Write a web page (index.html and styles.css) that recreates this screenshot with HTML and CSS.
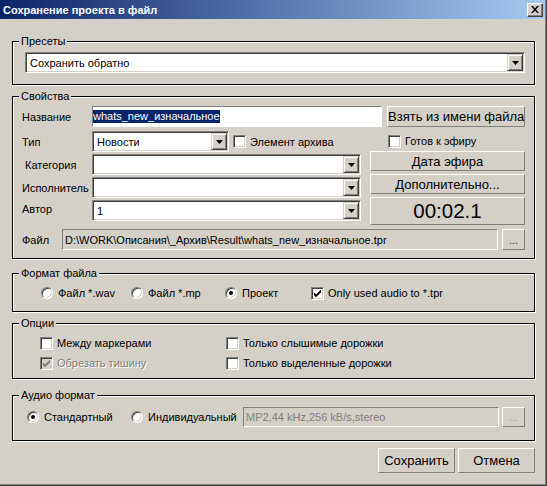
FILE: index.html
```html
<!DOCTYPE html>
<html lang="ru">
<head>
<meta charset="utf-8">
<title>Сохранение проекта в файл</title>
<link rel="stylesheet" href="styles.css">
</head>
<body>
<div class="window">
  <div class="titlebar">
    <span class="title">Сохранение проекта в файл</span>
    <span class="close"><svg width="8" height="7" viewBox="0 0 8 7"><path d="M0 0h2l2 2.5L6 0h2L5 3.5 8 7H6L4 4.5 2 7H0l3-3.5z"/></svg></span>
  </div>
  <div class="content">
    <fieldset class="group">
      <legend>Пресеты</legend>
      <div class="inner in-presets">
        <div class="combo"><span class="combo-text">Сохранить обратно</span><span class="drop"><svg class="arrow" width="7" height="4" viewBox="0 0 7 4"><path d="M0 0h7L3.5 4z"/></svg></span></div>
      </div>
    </fieldset>

    <fieldset class="group g-props">
      <legend>Свойства</legend>
      <div class="inner in-props">
        <div class="row r-name">
          <span class="lbl">Название</span>
          <div class="field name-field"><span class="sel">whats_new_изначальное</span></div>
          <div class="btn btn-take">Взять из имени файла</div>
        </div>
        <div class="mid">
          <div class="mid-left">
            <div class="row">
              <span class="lbl">Тип</span>
              <div class="combo c-type"><span class="combo-text">Новости</span><span class="drop"><svg class="arrow" width="7" height="4" viewBox="0 0 7 4"><path d="M0 0h7L3.5 4z"/></svg></span></div>
              <span class="chk-item chk-arch"><span class="chk"></span>Элемент архива</span>
            </div>
            <div class="row">
              <span class="lbl lbl-ind">Категория</span>
              <div class="combo c-long"><span class="combo-text"></span><span class="drop"><svg class="arrow" width="7" height="4" viewBox="0 0 7 4"><path d="M0 0h7L3.5 4z"/></svg></span></div>
            </div>
            <div class="row">
              <span class="lbl">Исполнитель</span>
              <div class="combo c-long"><span class="combo-text"></span><span class="drop"><svg class="arrow" width="7" height="4" viewBox="0 0 7 4"><path d="M0 0h7L3.5 4z"/></svg></span></div>
            </div>
            <div class="row">
              <span class="lbl lbl-up">Автор</span>
              <div class="combo c-long"><span class="combo-text">1</span><span class="drop"><svg class="arrow" width="7" height="4" viewBox="0 0 7 4"><path d="M0 0h7L3.5 4z"/></svg></span></div>
            </div>
          </div>
          <div class="mid-right">
            <div class="chk-item ready"><span class="chk"></span>Готов к эфиру</div>
            <div class="btn btn-r">Дата эфира</div>
            <div class="btn btn-r">Дополнительно...</div>
            <div class="timer">00:02.1</div>
          </div>
        </div>
        <div class="row r-file">
          <span class="lbl lbl-file">Файл</span>
          <div class="field dis file-field">D:\WORK\Описания\_Архив\Result\whats_new_изначальное.tpr</div>
          <div class="btn btn-dots">...</div>
        </div>
      </div>
    </fieldset>

    <fieldset class="group g-format">
      <legend>Формат файла</legend>
      <div class="inner in-format">
        <div class="row r-opt">
          <span class="opt w90"><span class="radio"></span>Файл *.wav</span>
          <span class="opt w94"><span class="radio"></span>Файл *.mp</span>
          <span class="opt w86"><span class="radio on"></span>Проект</span>
          <span class="opt"><span class="chk"><svg width="7" height="7" viewBox="0 0 7 7"><path d="M0 2.5L2 4.5 7 -0.5V2.5L2 7.2 0 5.2z"/></svg></span>Only used audio to *.tpr</span>
        </div>
      </div>
    </fieldset>

    <fieldset class="group g-options">
      <legend>Опции</legend>
      <div class="inner in-options">
        <div class="opt-grid">
          <span class="opt"><span class="chk"></span>Между маркерами</span>
          <span class="opt"><span class="chk"></span>Только слышимые дорожки</span>
          <span class="opt dis-text"><span class="chk dis"><svg width="7" height="7" viewBox="0 0 7 7"><path d="M0 2.5L2 4.5 7 -0.5V2.5L2 7.2 0 5.2z"/></svg></span>Обрезать тишину</span>
          <span class="opt"><span class="chk"></span>Только выделенные дорожки</span>
        </div>
      </div>
    </fieldset>

    <fieldset class="group g-audio">
      <legend>Аудио формат</legend>
      <div class="inner in-audio">
        <div class="row r-audio">
          <span class="opt w104"><span class="radio on"></span>Стандартный</span>
          <span class="opt w112"><span class="radio"></span>Индивидуальный</span>
          <div class="field dis audio-field">MP2,44 kHz,256 kB/s,stereo</div>
          <div class="btn btn-dots dots-dis">...</div>
        </div>
      </div>
    </fieldset>

    <div class="actions">
      <div class="btn btn-act">Сохранить</div>
      <div class="btn btn-act">Отмена</div>
    </div>
  </div>
</div>
</body>
</html>
```
FILE: styles.css
```css
* { box-sizing: border-box; }
html, body { margin: 0; padding: 0; }
body {
  width: 547px;
  height: 486px;
  overflow: hidden;
  background: #d4d0c8;
  font-family: "Liberation Sans", Arial, sans-serif;
  font-size: 11px;
  color: #000;
}
.window {
  width: 547px;
  height: 486px;
  background: #d4d0c8;
  box-shadow: inset -1px -1px 0 #404040, inset -2px -2px 0 #808080;
}
.titlebar {
  width: 545px;
  height: 19px;
  display: flex;
  align-items: center;
  padding-left: 3px;
  background: linear-gradient(to right, #0a246a, #a6caf0);
}
.title {
  flex: 1;
  color: #fff;
  font-weight: bold;
  font-size: 11px;
}
.close {
  width: 16px;
  height: 14px;
  margin-right: 2px;
  display: flex;
  align-items: center;
  justify-content: center;
  background: #d4d0c8;
  border: 1px solid;
  border-color: #fff #404040 #404040 #fff;
  box-shadow: inset -1px -1px 0 #808080;
}
.content { padding: 0 12px; }

.group {
  margin: 4px 0 0 0;
  padding: 0;
  min-width: 0;
  border: 1px solid #000;
  box-shadow: inset 1px 1px 0 #fff, 1px 1px 0 #fff;
}
.group legend {
  margin-left: 6px;
  padding: 0 2px;
  line-height: 15px;
  background: #d4d0c8;
}
.group:first-child { margin-top: 15px; }
.g-format { margin-top: 7px; }
.g-audio { margin-top: 9px; }

.in-presets { padding: 3px 9px 11px 12px; }
.in-props { padding: 2px 9px 8px 9px; }
.in-format { padding: 4px 9px 10px 28px; }
.in-options { padding: 4px 9px 7px 27px; }
.in-audio { padding: 4px 9px 13px 14px; }

.row { display: flex; align-items: center; }
.lbl { width: 70px; flex: none; }
.lbl-ind { padding-left: 3px; }
.lbl-up { position: relative; top: -2px; }
.lbl-file { width: 40px; }

.combo {
  height: 21px;
  display: flex;
  background: #fff;
  border: 1px solid;
  border-color: #808080 #fff #fff #808080;
  box-shadow: inset 1px 1px 0 #404040, inset -1px -1px 0 #d4d0c8;
  padding: 1px;
}
.combo-text {
  flex: 1;
  display: flex;
  align-items: center;
  padding-left: 3px;
}
.drop {
  width: 16px;
  flex: none;
  display: flex;
  align-items: center;
  justify-content: center;
  background: #d4d0c8;
  border: 1px solid;
  border-color: #d4d0c8 #404040 #404040 #d4d0c8;
  box-shadow: inset 1px 1px 0 #fff, inset -1px -1px 0 #808080;
}
.arrow { display: block; }
.c-type { width: 137px; flex: none; }
.c-long { flex: 1; }

.field {
  height: 21px;
  display: flex;
  align-items: center;
  background: #fff;
  border: 1px solid;
  border-color: #808080 #fff #fff #808080;
  padding-left: 1px;
  white-space: nowrap;
  overflow: hidden;
}
.field.dis { background: #d4d0c8; }
.name-field { width: 290px; flex: none; margin-right: 5px; padding-left: 0; }
.sel {
  background: #0a246a;
  color: #fff;
  line-height: 13px;
}
.file-field { flex: 1; margin-right: 4px; padding-left: 2px; }
.audio-field { flex: 1; height: 20px; margin-right: 3px; padding-left: 2px; color: #808080; }

.btn {
  display: flex;
  align-items: center;
  justify-content: center;
  background: #d4d0c8;
  border: 1px solid;
  border-color: #fff #808080 #808080 #fff;
  font-size: 13px;
  white-space: nowrap;
}
.btn-take { flex: 1; height: 21px; }
.btn-r { height: 20px; }
.btn-r + .btn-r { margin-top: 3px; }
.btn-dots {
  width: 23px;
  height: 21px;
  flex: none;
  font-size: 11px;
  color: #404040;
  align-items: flex-end;
  padding-bottom: 3px;
}
.dots-dis { height: 20px; color: #a0a0a0; }

.mid { display: flex; gap: 9px; margin-top: 4px; }
.mid-left { width: 339px; display: flex; flex-direction: column; gap: 2px; }
.mid-right { flex: 1; display: flex; flex-direction: column; }
.ready { height: 20px; padding-left: 18px; }
.timer {
  height: 28px;
  margin-top: 3px;
  display: flex;
  align-items: center;
  justify-content: center;
  font-size: 20.5px;
  border: 1px solid;
  border-color: #fff #808080 #808080 #fff;
}
.r-file { margin-top: 4px; }

.chk-item { display: flex; align-items: center; }
.chk-arch { margin-left: 4px; }
.chk {
  width: 13px;
  height: 13px;
  flex: none;
  margin-right: 4px;
  display: flex;
  align-items: center;
  justify-content: center;
  background: #fff;
  border: 1px solid;
  border-color: #808080 #fff #fff #808080;
  box-shadow: inset 1px 1px 0 #404040, inset -1px -1px 0 #d4d0c8;
}
.chk.dis { background: #d4d0c8; }
.chk.dis svg { fill: #808080; }
.radio {
  width: 12px;
  height: 12px;
  flex: none;
  margin-right: 5px;
  display: flex;
  align-items: center;
  justify-content: center;
  border-radius: 50%;
  background: #fff;
  border: 1px solid;
  border-color: #808080 #fff #fff #808080;
  box-shadow: inset 1px 1px 0 #404040, inset -1px -1px 0 #d4d0c8;
}
.radio.on::after {
  content: "";
  width: 4px;
  height: 4px;
  border-radius: 50%;
  background: #000;
}
.opt { display: flex; align-items: center; height: 16px; white-space: nowrap; }
.w90 { width: 90px; }
.w94 { width: 94px; }
.w86 { width: 86px; }
.w104 { width: 104px; flex: none; }
.w112 { width: 112px; flex: none; }
.opt-grid {
  display: grid;
  grid-template-columns: 186px 1fr;
  row-gap: 4px;
}
.dis-text { color: #808080; text-shadow: 1px 1px 0 #fff; }
.r-audio { height: 20px; }

.actions {
  display: flex;
  justify-content: flex-end;
  gap: 3px;
  margin-top: 7px;
}
.btn-act { width: 77px; height: 25px; }
```
